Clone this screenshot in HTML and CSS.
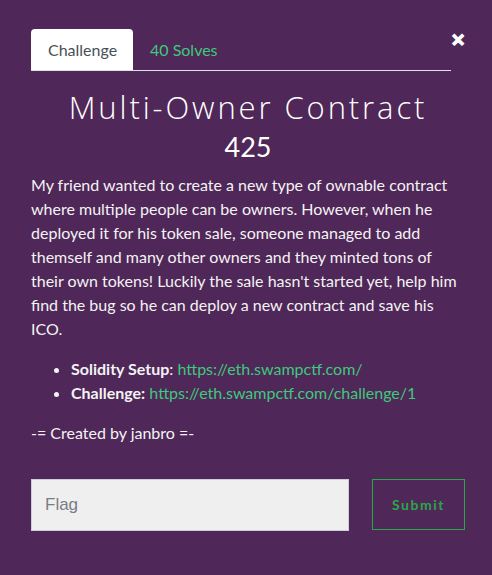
FILE: index.html
```html
<!DOCTYPE html>
<html>
<head>
<meta charset="utf-8">
<link rel="stylesheet" href="styles.css">
</head>
<body>
<div class="modal">
  <div class="close">&#x2715;</div>
  <div class="tabs">
    <div class="tab active">Challenge</div>
    <div class="tab solves">40 Solves</div>
  </div>
  <h1 class="title">Multi-Owner Contract</h1>
  <div class="points">425</div>
  <p class="desc">My friend wanted to create a new type of ownable contract where multiple people can be owners. However, when he deployed it for his token sale, someone managed to add themself and many other owners and they minted tons of their own tokens! Luckily the sale hasn't started yet, help him find the bug so he can deploy a new contract and save his ICO.</p>
  <ul class="links">
    <li><b>Solidity Setup</b>: <a href="#">https://eth.swampctf.com/</a></li>
    <li><b>Challenge:</b> <a href="#">https://eth.swampctf.com/challenge/1</a></li>
  </ul>
  <p class="author">-= Created by janbro =-</p>
  <div class="form">
    <input class="flag" type="text" placeholder="Flag">
    <button class="submit">Submit</button>
  </div>
</div>
</body>
</html>
```
FILE: styles.css
```css
html, body {
  margin: 0;
  padding: 0;
  background: #4f2758;
}
body {
  font-family: Lato, "Open Sans", sans-serif;
  color: #f3f3f3;
  width: 492px;
  height: 575px;
  overflow: hidden;
}
.modal {
  position: relative;
  padding: 29px 27px 0 31px;
}
.close {
  position: absolute;
  top: 30px;
  right: 27px;
  font-size: 17px;
  font-weight: 900;
  color: #fff;
  line-height: 20px;
  -webkit-text-stroke: 1.2px #fff;
}
.tabs {
  display: flex;
  border-bottom: 1.5px solid #dee2e6;
  height: 41px;
  margin-right: 14px;
}
.tab {
  font-size: 16px;
  line-height: 41px;
  padding: 0 17px;
  border-radius: 4px 4px 0 0;
}
.tab.active {
  background: #fff;
  color: #495057;
  width: 68px;
}
.solves {
  color: #3ec97c;
}
.title {
  margin: 17px 0 0 0;
  text-align: center;
  font-family: "Open Sans", sans-serif;
  font-weight: 300;
  font-size: 31px;
  letter-spacing: 2.9px;
  line-height: 38px;
  color: #fff;
}
.points {
  text-align: center;
  font-size: 27px;
  line-height: 34px;
  margin-top: 4px;
  color: #fff;
}
.desc {
  margin: 9px 0 0 0;
  font-size: 16px;
  line-height: 24px;
}
.links {
  margin: 16px 0 0 0;
  padding-left: 40px;
  font-size: 16px;
  line-height: 24px;
}
.links b {
  font-weight: 700;
}
.links a {
  color: #3ec97c;
  text-decoration: none;
}
.author {
  margin: 16px 0 0 0;
  font-size: 16px;
  line-height: 24px;
}
.form {
  display: flex;
  justify-content: space-between;
  margin-top: 34px;
}
.flag {
  box-sizing: border-box;
  width: 318px;
  height: 52px;
  background: #efefef;
  border: 1px solid #ccd0d4;
  border-radius: 0;
  padding: 0 13px;
  font-family: "Liberation Sans", Arial, sans-serif;
  font-size: 17px;
  color: #6c757d;
  outline: none;
}
.flag::placeholder {
  color: #777d84;
}
.submit {
  box-sizing: border-box;
  width: 93px;
  height: 51px;
  background: transparent;
  border: 1px solid #28a745;
  color: #28a745;
  font-family: Lato, sans-serif;
  font-weight: 700;
  font-size: 14px;
  letter-spacing: 1.5px;
  padding: 0;
}
```
